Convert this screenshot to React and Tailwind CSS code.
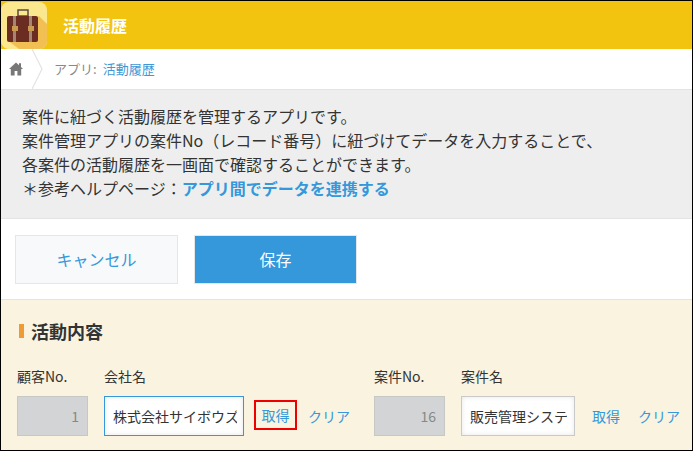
const font = { fontFamily: '"Noto Sans CJK JP", sans-serif' };

const AppIcon = () => (
  <svg width="46" height="47" viewBox="0 0 46 47" className="shrink-0 self-end">
    <rect x="0" y="0" width="46" height="47" rx="8" fill="#fbe88e" />
    <path d="M38 14 L46 22 V39 a8 8 0 0 1 -8 8 H18 L6 38 Z" fill="#f2c052" />
    <rect x="17" y="8" width="10" height="6" fill="none" stroke="#5b4a3f" strokeWidth="1.5" />
    <rect x="6" y="14" width="31" height="26" rx="2" fill="#6b2c22" />
    <rect x="12" y="14" width="3" height="26" fill="#a58670" />
    <rect x="28" y="14" width="3" height="26" fill="#a58670" />
    <rect x="11" y="24" width="6" height="5" fill="#c99a4f" />
    <rect x="27" y="24" width="6" height="5" fill="#c99a4f" />
  </svg>
);

const HomeIcon = () => (
  <svg width="14" height="14" viewBox="0 0 14 14" className="ml-[8px] shrink-0">
    <path d="M7 0.5 L10 3.2 V1.2 H12 V5 L14 7 H12.2 V13.5 H8.4 V9 H5.6 V13.5 H1.8 V7 H0 Z" fill="#777" />
  </svg>
);

const Field = ({ label, children, className }) => (
  <div className={className}>
    <div className="text-[14px] leading-[20px] text-[#333] mb-[10px] whitespace-nowrap">{label}</div>
    {children}
  </div>
);

const ReadOnlyNo = ({ value }) => (
  <div className="w-[71px] h-[40px] bg-[#d2d4d5] border border-[#c6c8c6] flex items-center justify-end pr-[8px] text-[14px] text-[#888]">
    {value}
  </div>
);

const TextBox = ({ value, active }) => (
  <div className={`h-[40px] bg-white border flex items-center pl-[8px] text-[14px] text-[#333] shadow-[inset_0_0_5px_rgba(0,0,0,0.1)] ${active ? 'w-[140px] border-[#3498db] pr-[6px]' : 'w-[114px] border-[#c9c9c9] pr-[7px]'}`}>
    <span className="block overflow-hidden whitespace-nowrap">{value}</span>
  </div>
);

const App = () => {
  return (
    <div className="w-[693px] h-[451px] overflow-hidden border border-black bg-white flex flex-col" style={font}>
      {/* Header */}
      <div className="h-[48px] shrink-0 bg-[#f2c40f] flex items-center">
        <AppIcon />
        <span className="ml-[16px] text-[16px] font-bold text-white">活動履歴</span>
      </div>

      {/* Breadcrumb */}
      <div className="h-[40px] shrink-0 bg-white flex items-center relative">
        <HomeIcon />
        <svg width="12" height="40" viewBox="0 0 12 40" className="ml-[9px] shrink-0">
          <path d="M0 0 L10 20 L0 40" fill="none" stroke="#e3e3e3" strokeWidth="1.2" />
        </svg>
        <span className="ml-[10px] text-[13px] text-[#888]">アプリ:</span>
        <span className="ml-[6px] text-[13px] text-[#3f97d6]">活動履歴</span>
      </div>

      {/* Description */}
      <div className="h-[130px] shrink-0 bg-[#eeeeee] border-y border-[#e3e3e3] pl-[21px] pt-[14px] text-[16px] leading-[24px] text-[#333]">
        <p>案件に紐づく活動履歴を管理するアプリです。</p>
        <p>案件管理アプリの案件No（レコード番号）に紐づけてデータを入力することで、</p>
        <p>各案件の活動履歴を一画面で確認することができます。</p>
        <p>
          ＊参考ヘルプページ：<span className="font-bold text-[#3498db]">アプリ間でデータを連携する</span>
        </p>
      </div>

      {/* Buttons */}
      <div className="h-[80px] shrink-0 bg-white pl-[14px] flex items-center gap-[16px]">
        <button className="w-[163px] h-[49px] bg-[#f7f9fa] border border-[#e3e7e8] text-[16px] text-[#3498db]">
          キャンセル
        </button>
        <button className="w-[163px] h-[49px] bg-[#3498db] border border-[#e3e7e8] text-[16px] text-white">
          保存
        </button>
      </div>

      {/* Section */}
      <div className="flex-1 bg-[#f9f3e0] border-t border-[#e5e5dc] pl-[16px] pt-[20px]">
        <div className="flex items-center h-[22px]">
          <span className="w-[5px] h-[14px] bg-[#ee9a35] mr-[7px] ml-[2px]" />
          <span className="text-[18px] font-bold text-[#333]">活動内容</span>
        </div>
        <div className="flex items-end mt-[24px]">
          <Field label="顧客No." className="w-[87px]">
            <ReadOnlyNo value="1" />
          </Field>
          <Field label="会社名">
            <TextBox value="株式会社サイボウズ" active />
          </Field>
          <div className="ml-[10px] mb-[6px] w-[43px] h-[30px] border-[2px] border-[#ee0000] flex items-center justify-center text-[14px] text-[#3498db]">
            取得
          </div>
          <span className="ml-[11px] w-[66px] h-[40px] flex items-center text-[14px] text-[#3498db]">クリア</span>
          <Field label="案件No." className="w-[87px]">
            <ReadOnlyNo value="16" />
          </Field>
          <Field label="案件名">
            <TextBox value="販売管理システム" />
          </Field>
          <span className="ml-[17px] h-[40px] flex items-center text-[14px] text-[#3498db]">取得</span>
          <span className="ml-[18px] h-[40px] flex items-center text-[14px] text-[#3498db]">クリア</span>
        </div>
      </div>
    </div>
  );
};

export default App;
